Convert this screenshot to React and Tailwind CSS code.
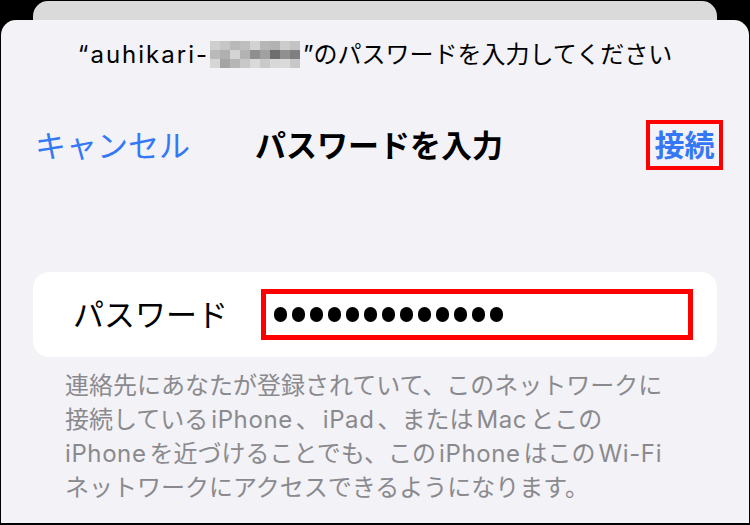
const MOSAIC = [
  ["#cfcfcf", "#c6c6c6", "#b9b9b9", "#bebebe", "#d2d2d2", "#b6b6b6", "#b2b2b2", "#cccccc", "#c3c3c3"],
  ["#bababa", "#b0b0b0", "#d4d4d4", "#b3b3b3", "#8f8f8f", "#a1a1a1", "#6e6e6e", "#909090", "#7f7f7f"],
  ["#d6d6d6", "#a4a4a4", "#b6b6b6", "#c8c8c8", "#dadada", "#c9c9c9", "#d8d8d8", "#dadada", "#c8c8c8"],
];

function Mosaic() {
  return (
    <span className="inline-flex flex-col mx-[1px]">
      {MOSAIC.map((row, r) => (
        <span key={r} className="flex">
          {row.map((c, i) => (
            <span key={i} className="block w-[10px] h-[9px]" style={{ backgroundColor: c }} />
          ))}
        </span>
      ))}
    </span>
  );
}

// latin words in japanese text get a little air on each side, as on iOS
function L({ children }) {
  return <span className="px-[3px] tracking-[0.6px]">{children}</span>;
}

export default function App() {
  return (
    <div
      className="w-[750px] h-[525px] bg-black flex flex-col pb-[2px] overflow-hidden"
      style={{ fontFamily: 'Inter, "Noto Sans CJK JP", sans-serif' }}
    >
      {/* stacked sheet behind */}
      <div className="mx-[33px] mt-[1px] h-[40px] shrink-0 rounded-t-[15px] bg-[#dadada]" />

      {/* front sheet */}
      <div className="-mt-[21px] ml-[1px] mr-[1px] flex-1 rounded-t-[15px] bg-[#f2f2f7] flex flex-col">
        <div className="pt-[18px] flex items-center justify-center text-[24px] leading-[33px] text-black">
          <span className="tracking-[2px]">“auhikari-</span>
          <Mosaic />
          <span className="ml-[2px]">”のパスワードを入力してください</span>
        </div>

        <div className="mt-[49px] grid grid-cols-[1fr_auto_1fr] items-center pl-[34px] pr-[26px]">
          <span className="text-[31px] text-[#3478f6] leading-none">キャンセル</span>
          <span className="text-[31px] font-bold text-black leading-none">パスワードを入力</span>
          <div className="justify-self-end w-[77px] h-[50px] border-[4px] border-[#ff0000] flex items-center justify-center">
            <span className="text-[30px] font-semibold text-[#3478f6] leading-none">接続</span>
          </div>
        </div>

        <div className="mt-[102px] mx-[32px] h-[85px] rounded-[16px] bg-white flex items-center pl-[40px] pr-[24px]">
          <span className="w-[188px] text-[31px] text-black leading-none">パスワード</span>
          <div className="flex-1 h-[51px] border-[5px] border-[#ff0000] flex items-center gap-[5px] pl-[8px]">
            {Array.from({ length: 13 }).map((_, i) => (
              <span key={i} className="block w-[13px] h-[15px] rounded-full bg-black" />
            ))}
          </div>
        </div>

        <p className="mt-[12px] pl-[64px] pr-[20px] text-[24px] leading-[34px] text-[#8a8a8e] whitespace-nowrap">
          連絡先にあなたが登録されていて、このネットワークに
          <br />
          接続している<L>iPhone</L>、<L>iPad</L>、または<L>Mac</L>とこの
          <br />
          <span className="pr-[3px] tracking-[0.6px]">iPhone</span>を近づけることでも、この<L>iPhone</L>はこの<L>Wi-Fi</L>
          <br />
          ネットワークにアクセスできるようになります。
        </p>
      </div>
    </div>
  );
}
